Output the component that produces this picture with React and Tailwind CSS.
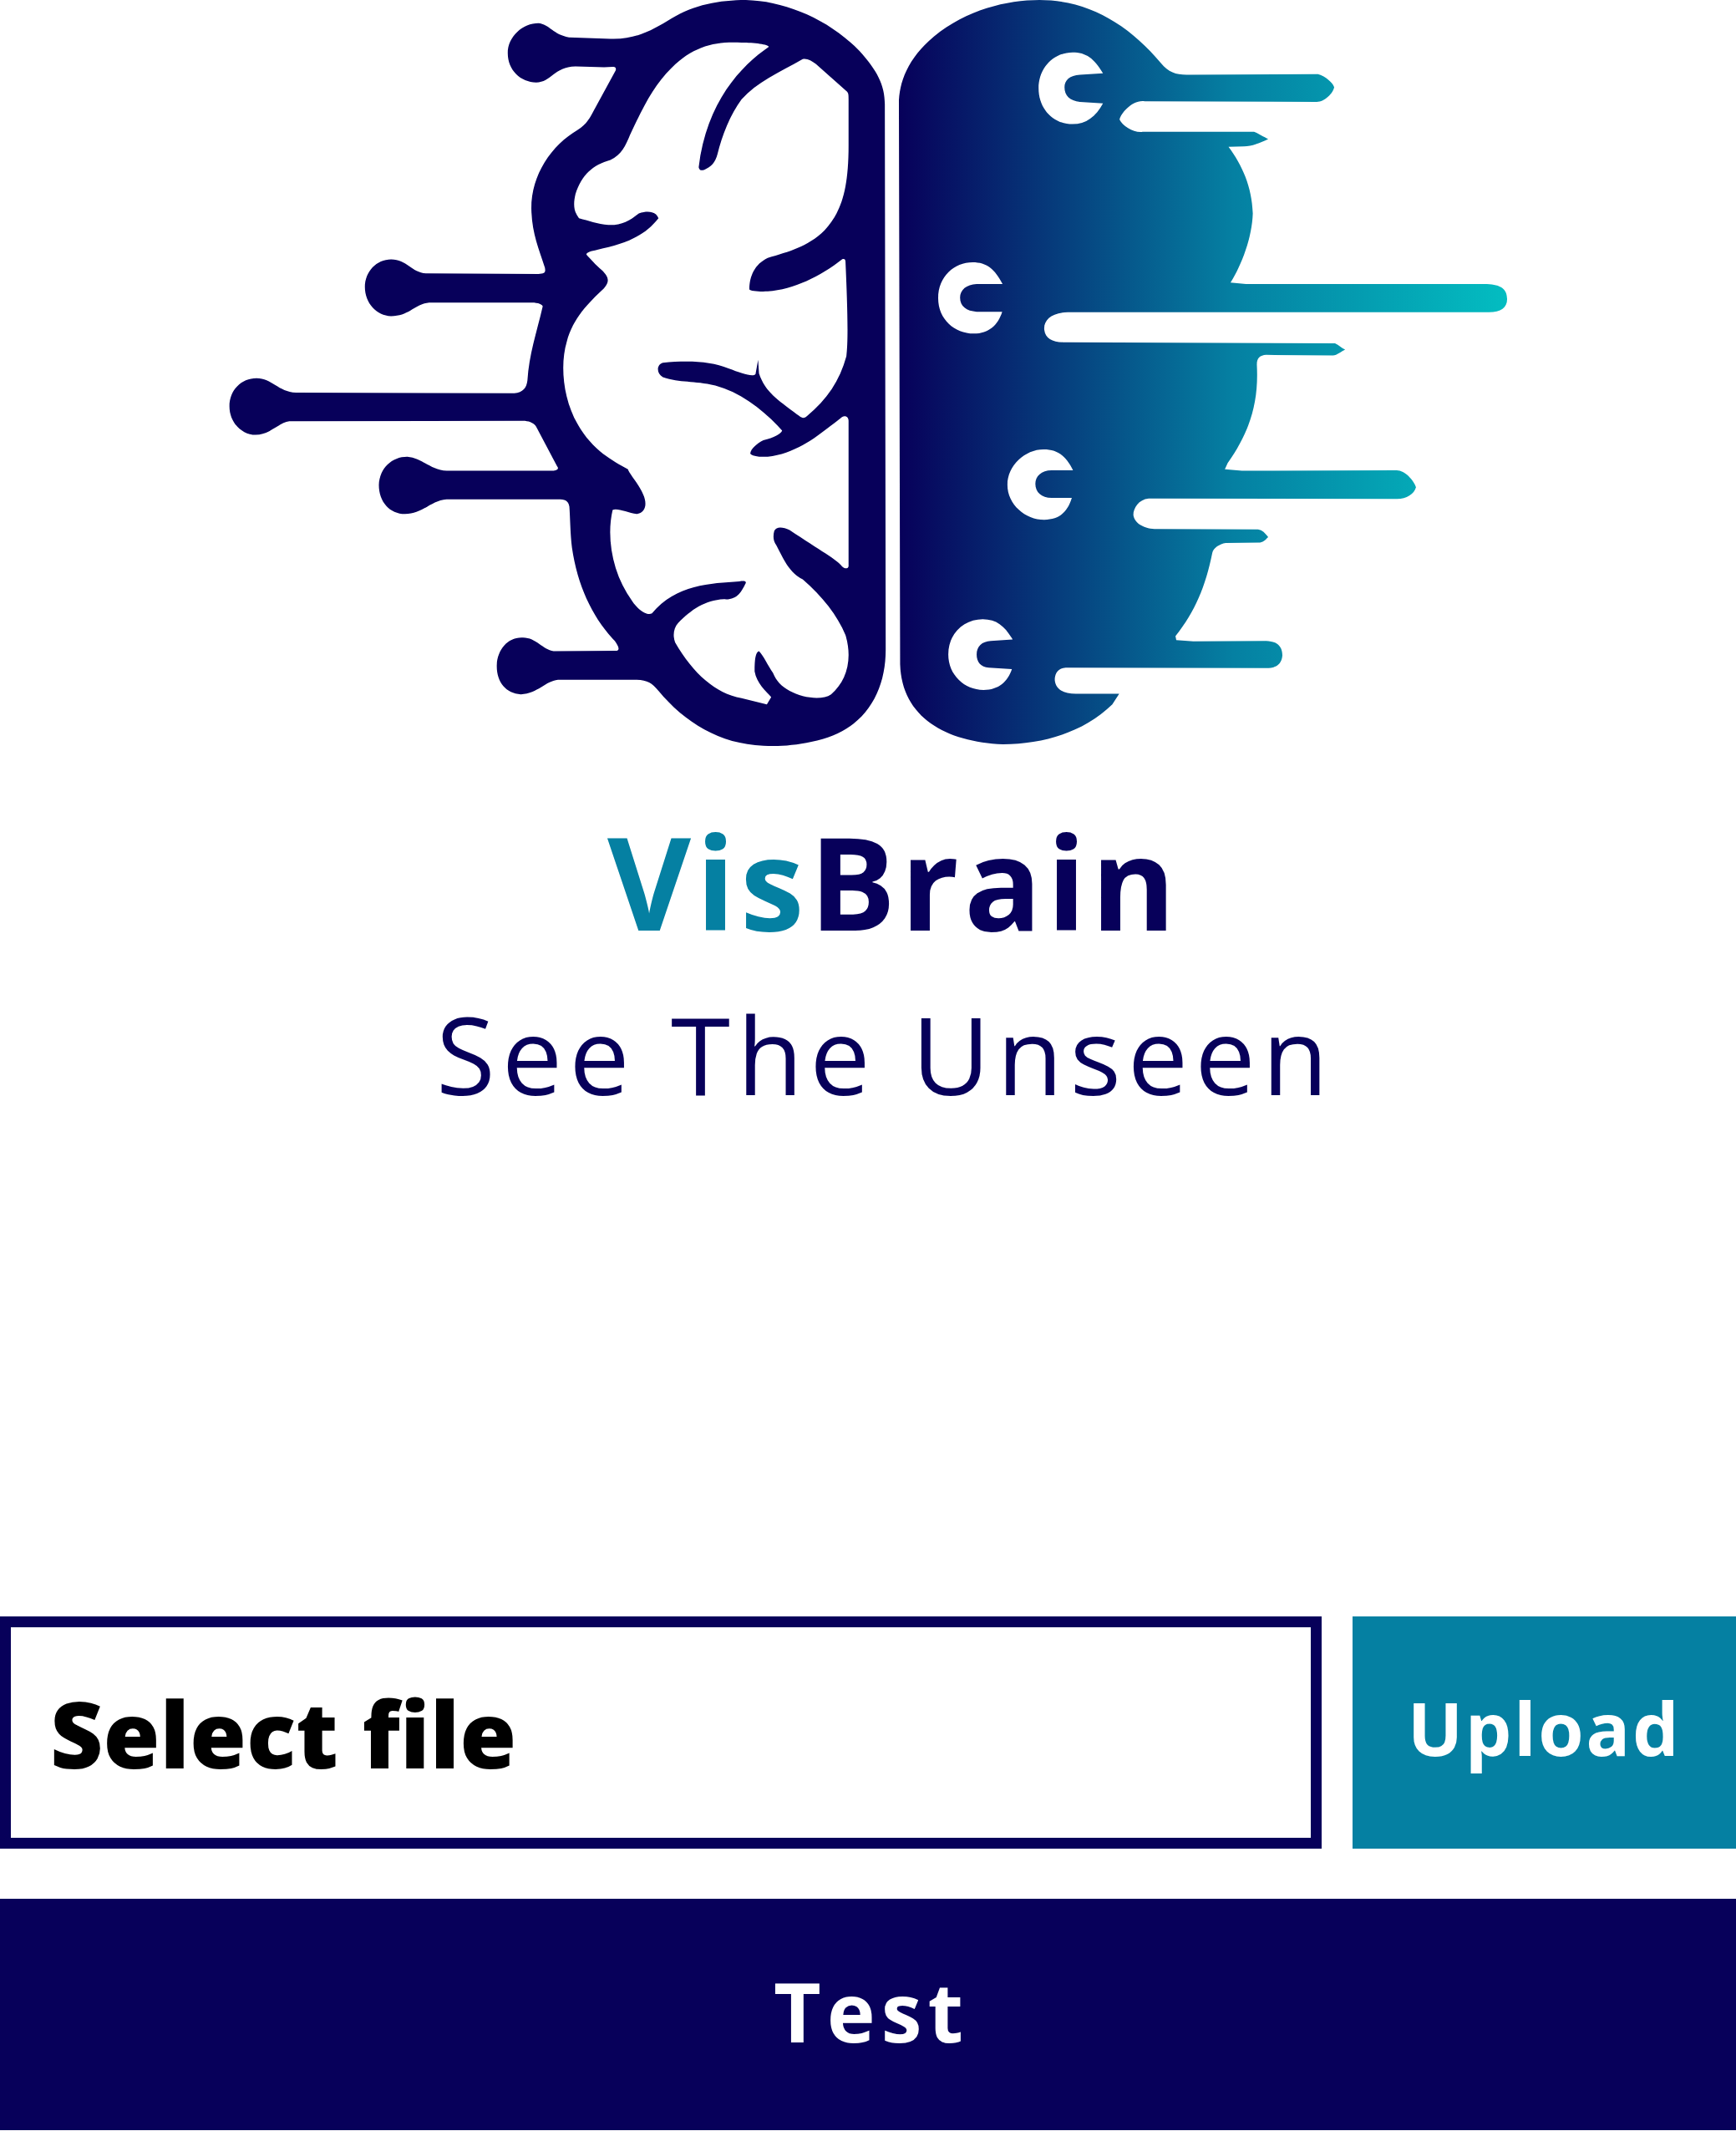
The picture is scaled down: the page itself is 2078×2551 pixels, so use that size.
import React from "react";

const LEFT_BRAIN =
  "M665 110C665 75 700 48 735 48C760 50 770 72 805 77L900 80C960 82 1000 60 1040 38C1090 10 1150 0 1210 0C1300 2 1400 40 1470 105C1510 145 1528 175 1528 215L1530 1340C1530 1430 1480 1510 1360 1530C1320 1538 1280 1540 1250 1538C1150 1535 1070 1490 1010 1425C995 1408 985 1403 960 1402L780 1402C750 1405 735 1430 695 1432C660 1430 638 1405 640 1370C642 1340 665 1313 700 1315C730 1315 745 1340 770 1343L915 1342C922 1340 918 1332 910 1322C860 1275 825 1210 812 1130C808 1100 808 1070 806 1045C804 1032 795 1030 780 1030L525 1030C490 1032 470 1060 430 1060C395 1060 370 1035 370 1000C372 965 400 942 435 942C470 945 490 970 525 971L770 971C780 969 782 966 778 962L730 880C725 872 712 868 700 868L165 869C140 872 120 897 88 897C55 897 28 870 28 838C28 805 55 780 90 780C125 780 140 808 180 810L680 811C700 810 708 800 710 785C714 730 730 690 745 632C745 628 735 624 720 624L485 624C450 628 440 652 398 652C365 652 338 625 338 592C338 560 365 535 398 535C435 535 445 563 480 564L735 565C750 564 752 562 750 552C735 510 720 480 719 430C719 360 765 300 825 268C845 258 855 240 862 228L912 145C914 139 910 138 905 138C880 140 850 137 820 137C770 138 765 170 730 170C695 170 665 145 665 110Z" +
  "M1262 97C1200 135 1120 210 1102 345C1104 352 1108 352 1115 350C1130 345 1140 335 1145 318C1155 280 1175 235 1200 205C1235 170 1285 150 1340 122C1350 120 1360 125 1370 132L1440 188C1445 192 1445 195 1445 205L1445 300C1445 400 1425 440 1390 475C1350 510 1310 518 1260 532C1230 545 1218 570 1218 597C1220 600 1240 602 1260 601C1320 597 1380 570 1430 535C1435 533 1438 535 1438 540C1442 620 1445 700 1440 735C1425 785 1395 825 1350 858C1340 866 1335 860 1320 850C1285 825 1255 810 1240 770L1238 742L1232 772C1225 778 1200 770 1170 760C1130 745 1080 743 1020 748C1005 752 1005 770 1020 778C1060 790 1090 785 1140 795C1200 810 1250 845 1293 888C1290 895 1275 902 1250 908C1235 915 1222 925 1220 935C1222 940 1240 943 1260 942C1330 935 1380 895 1430 860C1438 856 1445 860 1445 868L1445 1168C1442 1175 1435 1172 1430 1168C1420 1155 1380 1135 1310 1093C1295 1087 1280 1085 1275 1095C1272 1105 1272 1115 1280 1125C1300 1160 1310 1180 1340 1195C1385 1230 1420 1270 1438 1310C1455 1360 1440 1405 1405 1432C1385 1445 1340 1440 1310 1425C1290 1415 1280 1405 1272 1388C1260 1372 1250 1352 1240 1343C1232 1345 1230 1360 1230 1385C1235 1410 1255 1425 1268 1438L1258 1453L1200 1440C1140 1430 1090 1390 1048 1325C1042 1310 1045 1295 1055 1285C1085 1258 1115 1238 1160 1236C1190 1238 1200 1220 1210 1202C1210 1198 1205 1198 1195 1199C1130 1203 1050 1205 995 1265C985 1270 965 1260 950 1240C905 1185 890 1110 905 1052C915 1047 940 1058 960 1060C980 1058 985 1040 975 1020C965 998 945 980 940 968C905 950 860 930 825 875C790 820 785 750 800 705C815 655 850 625 885 595C900 580 895 570 880 557C865 545 855 535 845 525C845 520 855 518 870 515C930 503 975 490 1010 450C1005 438 990 433 965 440C945 455 925 465 895 464C870 462 850 455 828 450C815 435 815 420 820 400C835 360 860 340 900 330C925 320 935 300 945 278C975 220 1000 175 1040 140C1090 95 1140 85 1200 88C1230 88 1265 92 1262 97Z";

const RIGHT_BRAIN =
  "M33 215C33 170 55 120 120 75C200 20 300 0 380 0C500 0 600 50 680 130C700 150 720 155 750 154L1065 153C1080 153 1105 170 1108 180C1105 192 1085 210 1065 210L640 209C610 205 580 235 578 247C585 260 615 275 635 272L910 272C920 275 935 283 945 287C925 295 905 302 885 302L847 303C880 340 905 385 907 440C905 490 880 545 852 583L890 586L1485 586C1520 587 1535 597 1535 617C1535 635 1520 644 1490 644L450 644C410 645 390 660 392 680C395 700 415 706 445 706L1110 708C1120 712 1125 717 1135 721C1125 725 1115 733 1105 733L940 732C925 733 917 738 917 752C922 830 900 890 845 955L838 968L880 971L1260 970C1280 968 1305 990 1310 1005C1305 1020 1285 1030 1260 1029L650 1028C625 1030 612 1048 612 1062C615 1080 640 1091 670 1091L920 1092C930 1093 938 1100 945 1108C938 1113 935 1118 925 1119L840 1120C825 1122 810 1130 807 1140C790 1210 765 1260 716 1312L718 1320L760 1323L940 1322C970 1323 980 1335 980 1352C978 1370 965 1378 940 1378L445 1377C425 1378 418 1390 418 1403C420 1422 440 1431 470 1431L577 1431L560 1453C490 1510 390 1535 290 1535C150 1530 40 1480 36 1370Z" +
  "M537 151C515 120 495 108 462 108C415 108 378 140 378 182C378 225 415 256 462 256C495 256 520 240 537 213L480 210C455 208 442 197 442 180C442 165 455 155 480 154Z" +
  "M289 586C270 555 250 541 215 541C170 541 130 570 130 615C130 658 170 688 218 688C255 688 278 670 288 643L225 643C200 642 184 632 184 614C184 598 200 587 225 586Z" +
  "M463 970C445 940 425 927 390 927C345 927 301 960 301 1000C301 1040 345 1072 392 1072C430 1072 450 1055 460 1027L410 1027C385 1027 370 1015 370 998C370 982 385 970 410 970Z" +
  "M314 1319C295 1292 275 1277 240 1277C195 1277 155 1305 155 1350C155 1392 195 1423 242 1423C280 1423 302 1405 312 1380L255 1377C235 1376 225 1365 225 1350C225 1333 238 1323 260 1322Z";

function BrainLogo() {
  return (
    <svg width="2078" height="910" viewBox="0 0 2078 910" className="block">
      <defs>
        <linearGradient id="brainFade" gradientUnits="userSpaceOnUse" x1="33" y1="0" x2="1535" y2="0">
          <stop offset="0" stopColor="#07005a" />
          <stop offset="0.55" stopColor="#0580a2" />
          <stop offset="1" stopColor="#03bdc1" />
        </linearGradient>
      </defs>
      <g transform="translate(260 0) scale(0.523 0.5804)">
        <path d={LEFT_BRAIN} fill="#07005a" fillRule="evenodd" />
      </g>
      <g transform="translate(1060 0) scale(0.4847 0.5804)">
        <path d={RIGHT_BRAIN} fill="url(#brainFade)" fillRule="evenodd" />
      </g>
    </svg>
  );
}

export default function App() {
  return (
    <div className="w-[2078px] h-[2551px] bg-white flex flex-col font-['Open_Sans',sans-serif]">
      <BrainLogo />

      <div className="pl-[727px] mt-[49px] h-[190px] text-[154px] leading-[190px] font-bold whitespace-nowrap tracking-[6px]">
        <span className="text-[#0580a2]">Vis</span>
        <span className="text-[#07005a]">Brain</span>
      </div>

      <div className="pl-[522px] mt-[37px] h-[150px] text-[129px] leading-[150px] text-[#07005a] whitespace-nowrap tracking-[8px]">
        See The Unseen
      </div>

      <div className="mt-auto flex flex-col gap-[60px] pb-[1px]">
        <div className="flex justify-between">
          <div className="w-[1582px] h-[278px] border-[13px] border-[#07005a] flex items-center pl-[47px]">
            <span className="text-[110px] font-extrabold text-black">Select file</span>
          </div>
          <button className="w-[459px] h-[278px] pb-[12px] bg-[#0580a2] text-white text-[88px] font-bold tracking-[2.5px]">Upload</button>
        </div>
        <button className="w-full h-[277px] pb-[9px] pl-[8px] bg-[#07005a] text-white text-[98px] font-bold tracking-[7px]">Test</button>
      </div>
    </div>
  );
}
